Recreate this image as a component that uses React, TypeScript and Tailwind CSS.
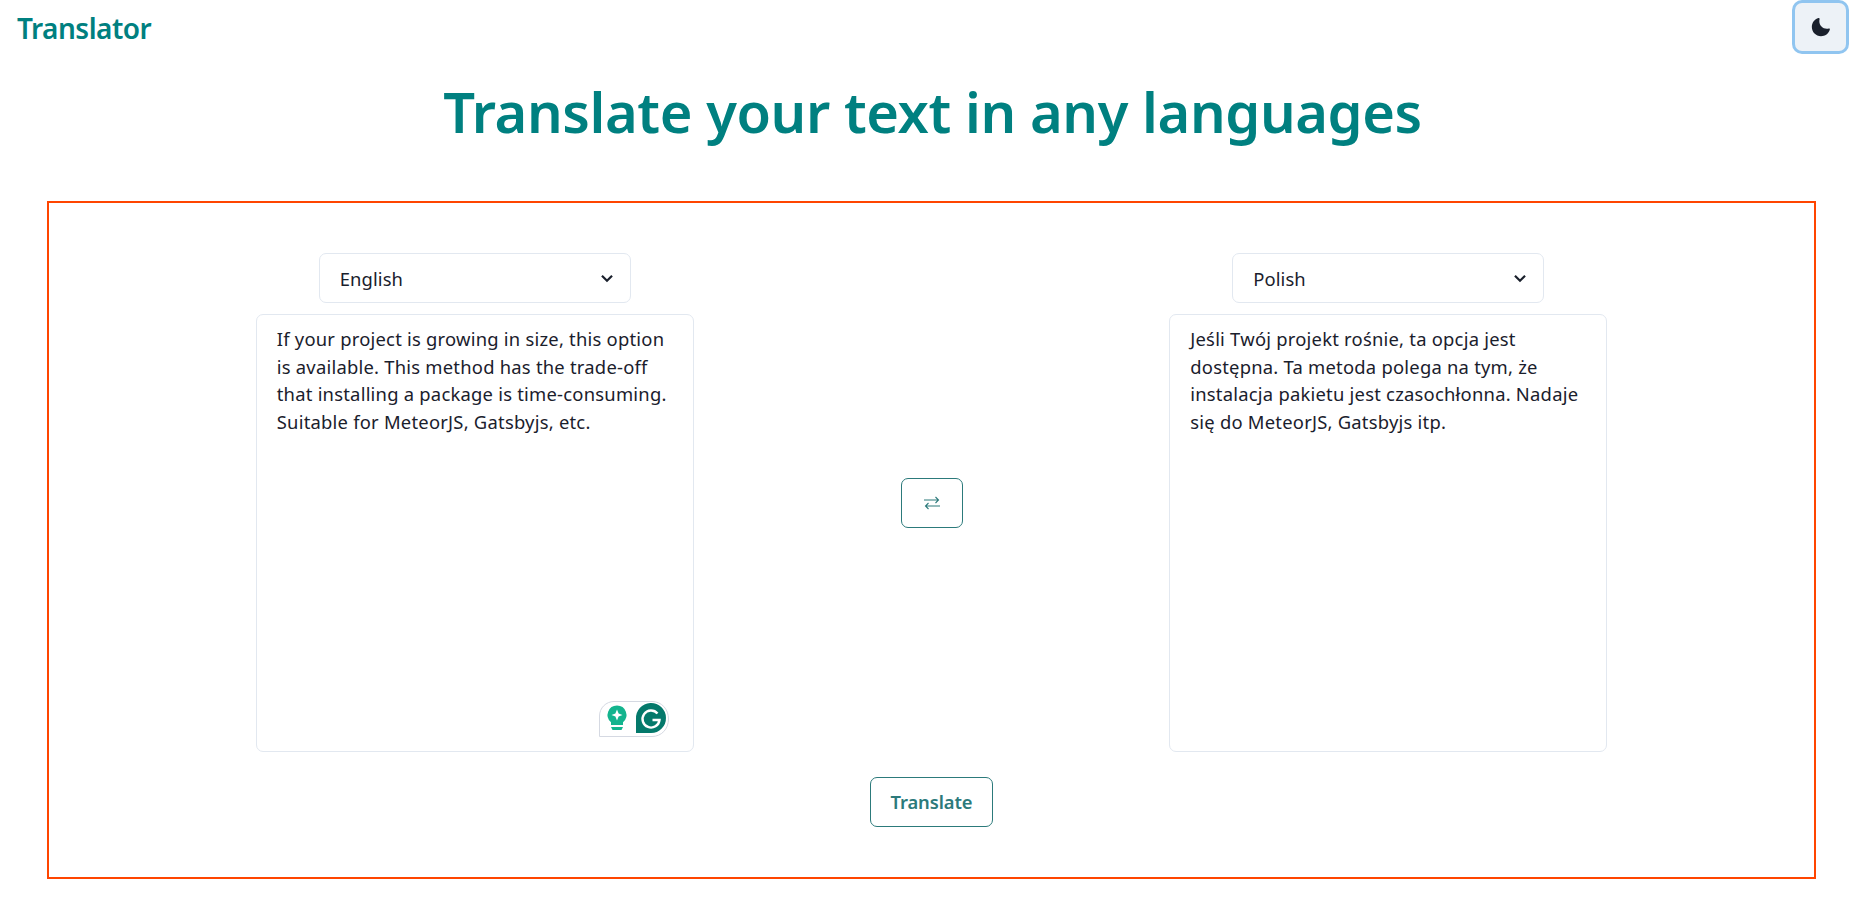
import { useState } from 'react'

const font = "font-['Noto_Sans',sans-serif]"

function LangColumn({ lang, text, grammarly }: { lang: string; text: string; grammarly?: boolean }) {
  const [value, setValue] = useState(text)
  return (
    <div className="flex w-[438px] flex-col items-center gap-[11px]">
      <div className="relative w-[312px]">
        <select
          defaultValue={lang}
          className="h-[50px] w-full appearance-none rounded-[7px] border border-[#e2e8f0] bg-white pl-5 pr-10 pt-[2px] text-[18.4px] tracking-[0.1px] text-[#1a202c] outline-none"
        >
          <option>{lang}</option>
        </select>
        <svg viewBox="0 0 24 24" className="pointer-events-none absolute right-[13px] top-[14px] h-[22px] w-[22px]" aria-hidden="true">
          <path fill="none" stroke="#1a202c" strokeWidth="2.4" d="M6.5 9.5 12 15l5.5-5.5" />
        </svg>
      </div>
      <div className="relative h-[438px] w-full">
        <textarea
          value={value}
          onChange={e => setValue(e.target.value)}
          spellCheck={false}
          className="block h-full w-full resize-none rounded-[7px] border border-[#e2e8f0] bg-white px-5 pt-[10px] text-[18.4px] leading-[27.7px] tracking-[0.23px] text-[#1a202c] outline-none"
        />
        {grammarly && (
          <svg viewBox="0 0 70 36" className="absolute bottom-[15px] right-[25px] h-[36px] w-[70px]" aria-hidden="true">
            <path d="M.5 35.5V15C.5 7 7 .5 15 .5h38C62.5.5 69.5 8 69.5 18S62.5 35.5 53 35.5Z" fill="#fff" stroke="#d5d9e2" />
            <path d="M18 4.5a9.5 9.5 0 0 1 6 16.8V24H12v-2.7A9.5 9.5 0 0 1 18 4.5z" fill="#13b48e" />
            <path d="M18 8.5l1.6 3.9 3.9 1.6-3.9 1.6-1.6 3.9-1.6-3.9-3.9-1.6 3.9-1.6z" fill="#fff" />
            <path d="M12 26h12l-1.5 3h-9z" fill="#13b48e" />
            <path d="M37 32V18a15 15 0 1 1 15 14z" fill="#04796b" />
            <path d="M58.5 12.5A8.5 8.5 0 1 0 60.5 19h-7" fill="none" stroke="#fff" strokeWidth="2.4" />
          </svg>
        )}
      </div>
    </div>
  )
}

export default function App() {
  return (
    <div className={`min-h-[913px] bg-white ${font}`}>
      {/* header */}
      <div className="flex h-[54px] items-start justify-between pl-[17px] pr-[19px]">
        <span className="pt-[6px] text-[28px] font-semibold leading-[44px] tracking-[-0.5px] text-[#008080]">Translator</span>
        <button
          type="button"
          className="mt-[3px] flex h-[48px] w-[51px] items-center justify-center rounded-[7px] bg-[#edf2f7] shadow-[0_0_0_3px_#90c5f0]"
        >
          <svg viewBox="0 0 24 24" className="h-[20px] w-[20px]" aria-hidden="true">
            <path
              fill="#1a202c"
              d="M21.4,13.7C20.6,13.9,19.8,14,19,14c-5,0-9-4-9-9c0-0.8,0.1-1.6,0.3-2.4c0.1-0.3,0-0.7-0.3-1 c-0.3-0.3-0.6-0.4-1-0.3C4.3,2.7,1,7.1,1,12c0,6.1,4.9,11,11,11c4.9,0,9.3-3.3,10.6-8.1c0.1-0.3,0-0.7-0.3-1 C22.1,13.7,21.7,13.6,21.4,13.7z"
            />
          </svg>
        </button>
      </div>

      <h1 className="pt-[12px] text-center text-[56px] font-semibold leading-[90px] tracking-[-0.4px] text-[#008080]">
        Translate your text in any languages
      </h1>

      {/* translate box */}
      <div className="ml-[47px] mr-[49px] mt-[45px] flex h-[678px] flex-col items-center border-2 border-[#ff4500] pt-[50px]">
        <div className="flex w-full items-center justify-evenly">
          <LangColumn
            lang="English"
            text="If your project is growing in size, this option is available. This method has the trade-off that installing a package is time-consuming. Suitable for MeteorJS, Gatsbyjs, etc."
            grammarly
          />
          <button
            type="button"
            className="flex h-[50px] w-[62px] items-center justify-center rounded-[7px] border border-[#2c7a7b] bg-white"
          >
            <svg viewBox="0 0 18 14" className="h-[14px] w-[18px]" aria-hidden="true">
              <path fill="none" stroke="#2c7a7b" strokeWidth="1.1" d="M1 4h14.5M12.5 1l3 3-3 3M17 10H2.5M5.5 7l-3 3 3 3" />
            </svg>
          </button>
          <LangColumn
            lang="Polish"
            text="Jeśli Twój projekt rośnie, ta opcja jest dostępna. Ta metoda polega na tym, że instalacja pakietu jest czasochłonna. Nadaje się do MeteorJS, Gatsbyjs itp."
          />
        </div>
        <button
          type="button"
          className="mt-[25px] h-[50px] w-[123px] rounded-[7px] border border-[#2c7a7b] bg-white text-[18.4px] font-semibold tracking-[-0.1px] text-[#2c7a7b]"
        >
          Translate
        </button>
      </div>
    </div>
  )
}
